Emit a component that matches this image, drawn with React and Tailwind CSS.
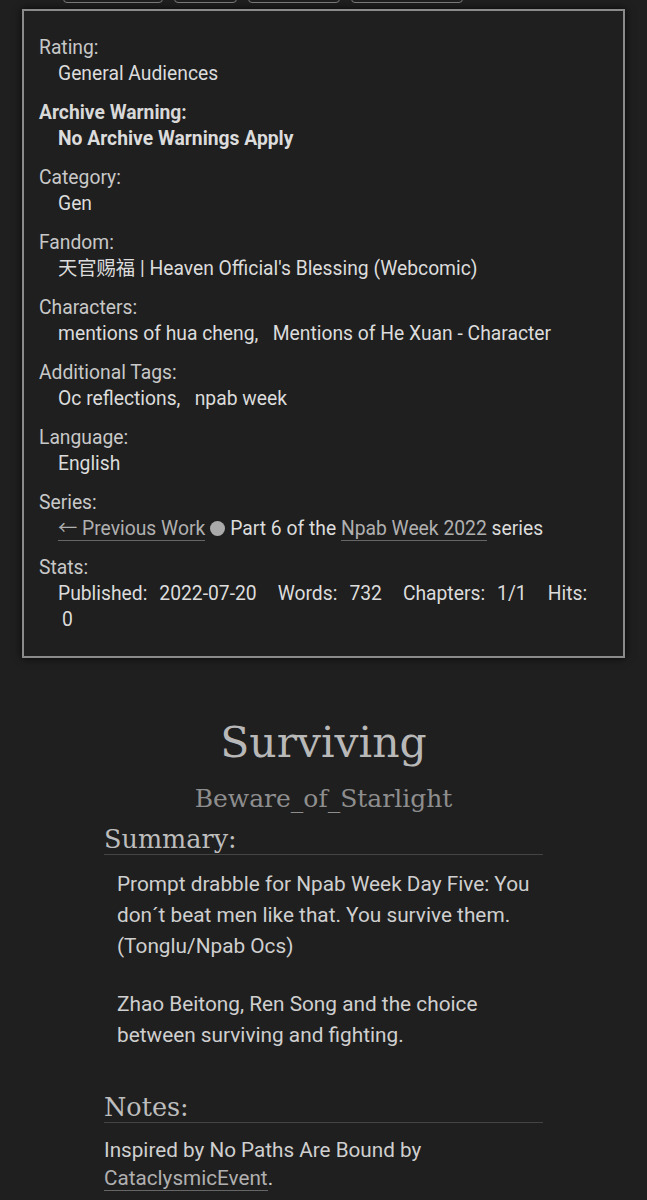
const sans = { fontFamily: 'Roboto, "Noto Sans CJK SC", sans-serif' }
const serif = { fontFamily: '"DejaVu Serif", "Liberation Serif", serif' }

function Link({ children }) {
  return <span className="border-b border-[#666] text-[#b0b0b0]">{children}</span>
}

function Meta({ label, bold, children }) {
  return (
    <div className="mb-[13px]">
      <div className={bold ? 'font-bold text-[#d8d8d8]' : 'text-[#c8c8c8]'}>{label}</div>
      <div className={'pl-[19px] text-[#dcdcdc] ' + (bold ? 'font-bold' : '')}>{children}</div>
    </div>
  )
}

function Stat({ label, value, first }) {
  return (
    <span className={first ? '' : 'ml-[21px]'}>
      {label}
      {value && <span className="ml-[12px]">{value}</span>}
    </span>
  )
}

export default function App() {
  return (
    <div className="min-h-[1200px] overflow-hidden bg-[#1f1f1f] text-[19.3px] leading-[26px]" style={sans}>
      {/* nav buttons cut off above the meta box */}
      <div className="-mt-[20px] flex gap-[11px] pl-[63px]">
        <div className="h-[23px] w-[100px] rounded-sm border border-[#777]" />
        <div className="h-[23px] w-[63px] rounded-sm border border-[#777]" />
        <div className="h-[23px] w-[92px] rounded-sm border border-[#777]" />
        <div className="h-[23px] w-[112px] rounded-sm border border-[#777]" />
      </div>

      <div className="mx-[22px] mt-[6px] border-2 border-[#8a8a8a] px-[15px] pb-[23px] pt-[24px] shadow-[0_0_8px_rgba(0,0,0,0.8)]">
        <Meta label="Rating:">General Audiences</Meta>
        <Meta label="Archive Warning:" bold>No Archive Warnings Apply</Meta>
        <Meta label="Category:">Gen</Meta>
        <Meta label="Fandom:">天官赐福 | Heaven Official's Blessing (Webcomic)</Meta>
        <Meta label="Characters:">mentions of hua cheng,&nbsp;&nbsp; Mentions of He Xuan - Character</Meta>
        <Meta label="Additional Tags:">Oc reflections,&nbsp;&nbsp; npab week</Meta>
        <Meta label="Language:">English</Meta>
        <Meta label="Series:">
          <Link>← Previous Work</Link>
          <span className="mx-[5px] inline-block h-[15px] w-[15px] translate-y-[1px] rounded-full bg-[#aaa]" />
          Part 6 of the <Link>Npab Week 2022</Link> series
        </Meta>
        <div>
          <div className="text-[#c8c8c8]">Stats:</div>
          <div className="pl-[19px] text-[#dcdcdc]">
            <Stat first label="Published:" value="2022-07-20" />
            <Stat label="Words:" value="732" />
            <Stat label="Chapters:" value="1/1" />
            <Stat label="Hits:" />
            <div className="pl-[4px]">0</div>
          </div>
        </div>
      </div>

      <div className="mx-[104px] mt-[55px]">
        <h2 className="text-center text-[42.5px] leading-[60px] text-[#b8b8b8]" style={serif}>Surviving</h2>
        <div className="mt-[8px] text-center text-[25px] leading-[36px] text-[#8e8e8e]" style={serif}>Beware_of_Starlight</div>

        <h3 className="mt-[7px] border-b border-[#444] text-[25.5px] leading-[30px] text-[#bdbdbd]" style={serif}>Summary:</h3>
        <div className="ml-[13px] mt-[14px] text-[20.8px] leading-[31px] text-[#cfcfcf]">
          <p>Prompt drabble for Npab Week Day Five: You don´t beat men like that. You survive them. (Tonglu/Npab Ocs)</p>
          <p className="mt-[27px]">Zhao Beitong, Ren Song and the choice between surviving and fighting.</p>
        </div>

        <h3 className="mt-[41px] border-b border-[#444] text-[25.5px] leading-[30px] text-[#bdbdbd]" style={serif}>Notes:</h3>
        <p className="mt-[13px] text-[20.7px] leading-[28px] text-[#cfcfcf]">
          Inspired by No Paths Are Bound by <Link>CataclysmicEvent</Link>.
        </p>
      </div>
    </div>
  )
}
